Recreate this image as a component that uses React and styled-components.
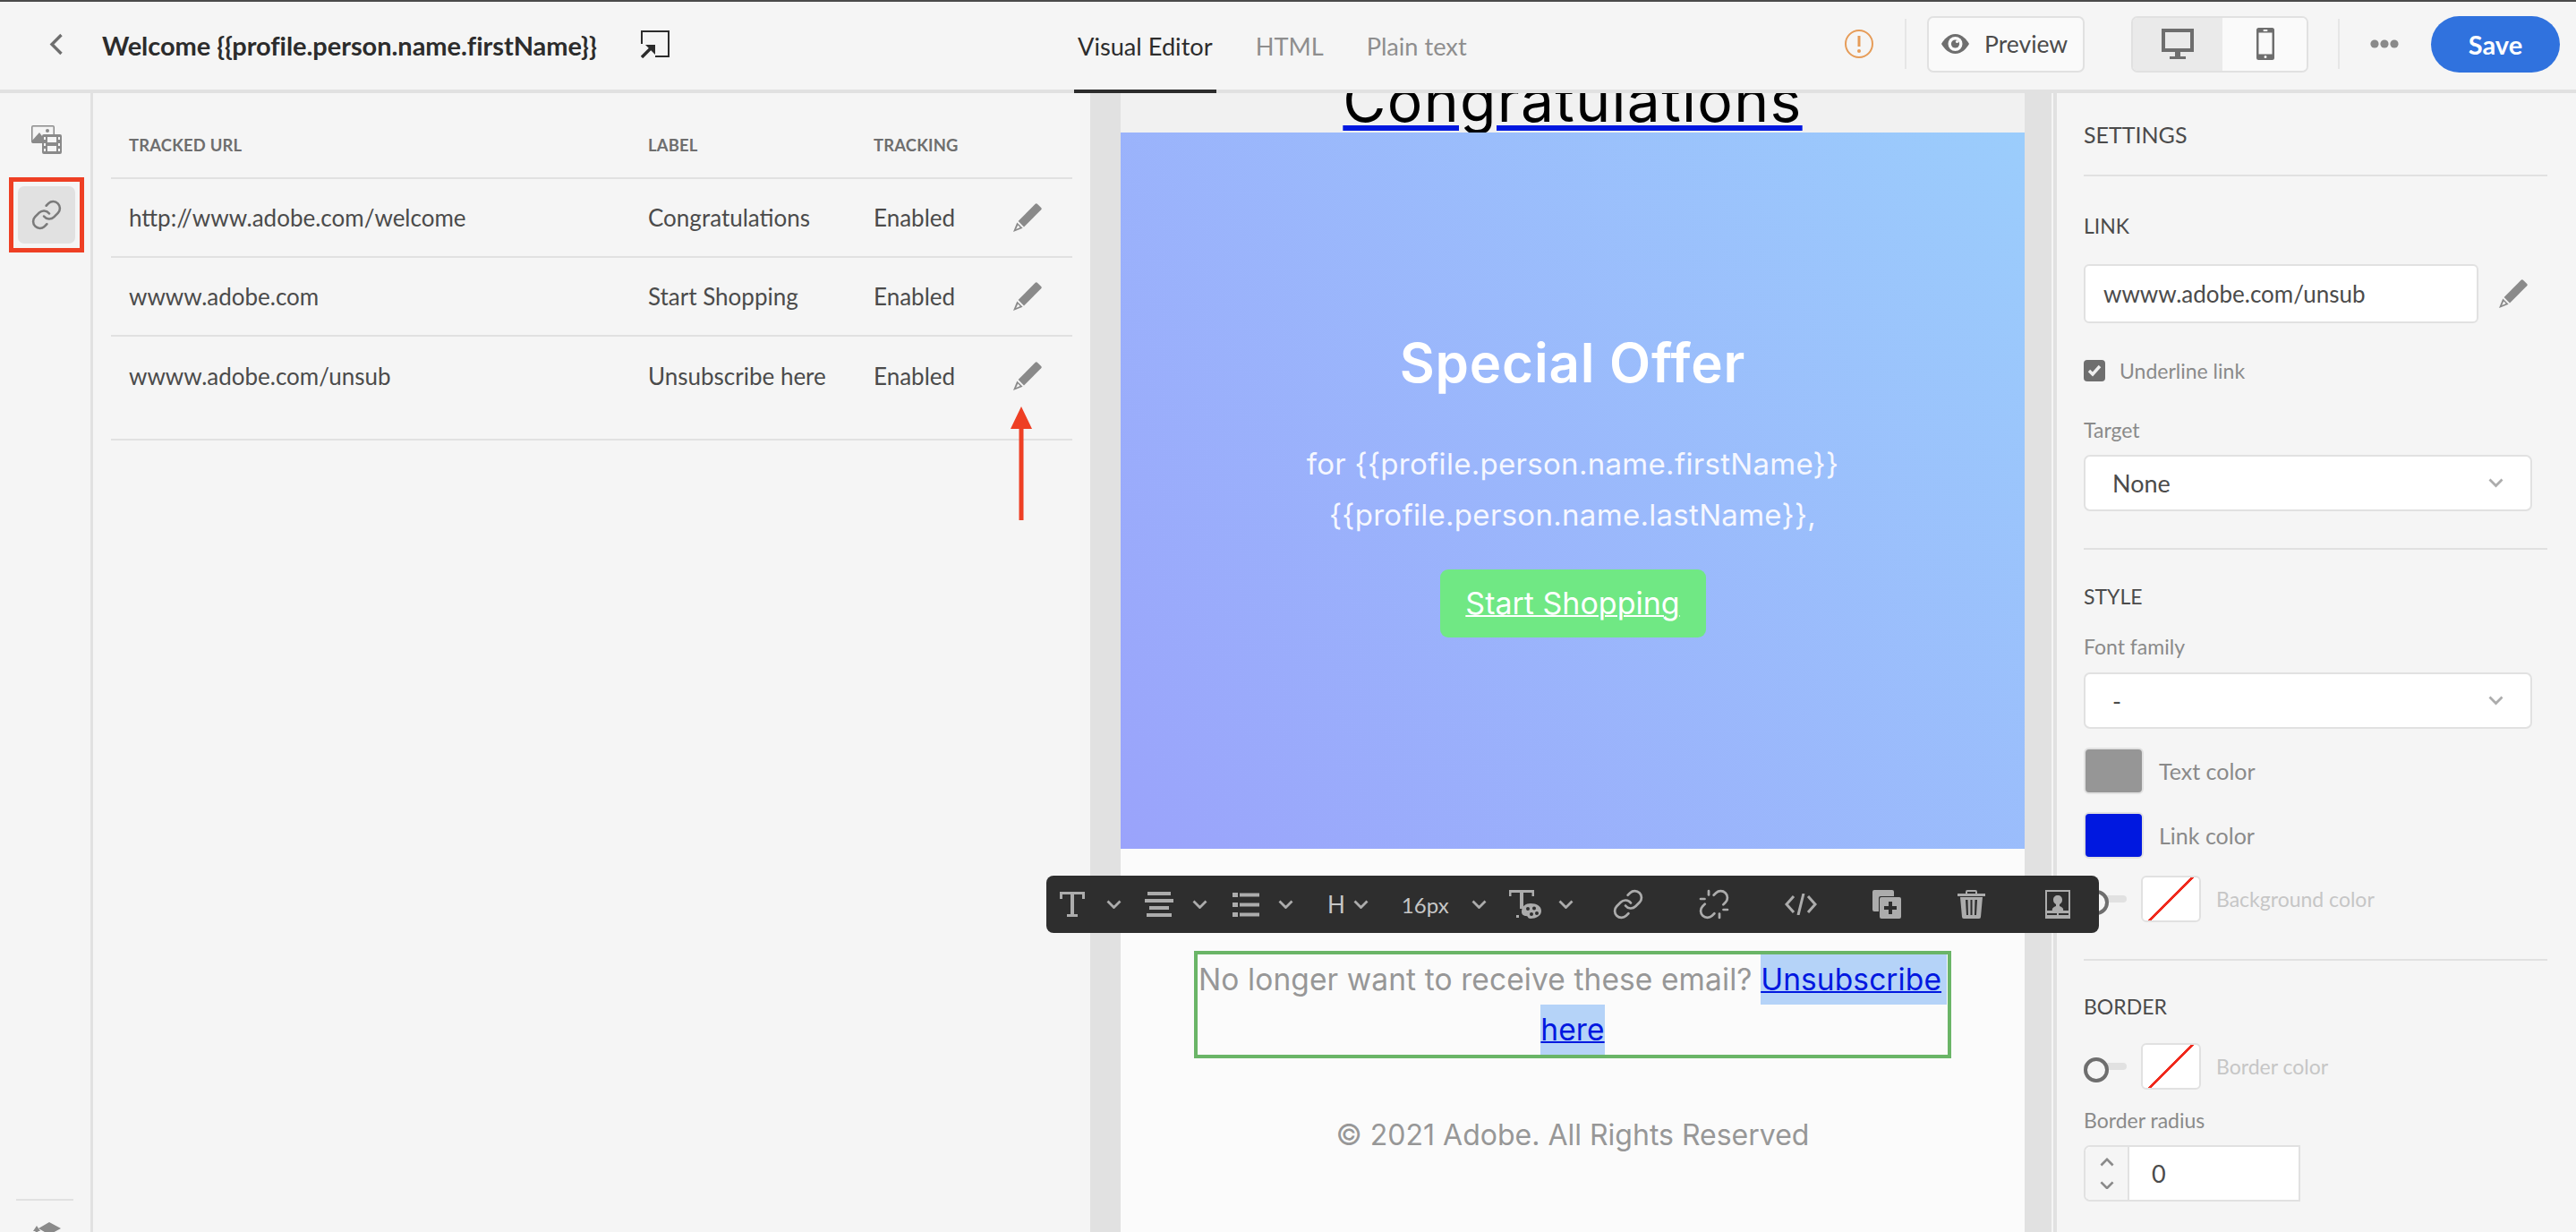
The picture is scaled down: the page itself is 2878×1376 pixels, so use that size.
import React from "react";
import styled, { createGlobalStyle } from "styled-components";
import { Link as LinkIcon, Unlink } from "lucide-react";

const UI_FONT = `"Lato", "Open Sans", sans-serif`;
const MAIL_FONT = `"Inter", "Liberation Sans", sans-serif`;

const GlobalStyle = createGlobalStyle`
  html, body { margin: 0; padding: 0; background: #f5f5f5; }
  body { font-family: ${UI_FONT}; overflow: hidden; }
  * { box-sizing: border-box; }
`;

const Page = styled.div`
  width: 2878px;
  height: 1376px;
  overflow: hidden;
  display: flex;
  flex-direction: column;
  background: #f5f5f5;
  border-top: 2px solid #4b4b4b;
`;

/* header */
const Header = styled.header`
  height: 102px;
  flex: none;
  display: flex;
  align-items: center;
  padding: 0 18px 4px 55px;
  border-bottom: 4px solid #e1e1e1;
`;

const Title = styled.h1`
  margin: 0 0 0 43px;
  padding-top: 2px;
  width: 602px;
  font-size: 29px;
  font-weight: 700;
  color: #2c2c2c;
  white-space: nowrap;
  letter-spacing: -0.05px;
`;

const Tabs = styled.nav`
  display: flex;
  align-self: stretch;
  margin-left: 452px;
  gap: 40px;
`;

const Tab = styled.div`
  display: flex;
  align-items: center;
  padding: 0 4px;
  margin-bottom: -8px;
  font-size: 27.2px;
  color: ${(p) => (p.$active ? "#2c2c2c" : "#8e8e8e")};
  border-bottom: 4px solid ${(p) => (p.$active ? "#2c2c2c" : "transparent")};
`;

const HeaderActions = styled.div`
  margin-left: auto;
  display: flex;
  align-items: center;
`;

const VRule = styled.span`
  width: 2px;
  height: 56px;
  background: #e6e6e6;
  margin: ${(p) => p.$margin};
`;

const PreviewButton = styled.button`
  width: 176px;
  height: 63px;
  display: flex;
  align-items: center;
  gap: 17px;
  padding: 0 0 0 14px;
  background: #fafafa;
  border: 2px solid #e1e1e1;
  border-radius: 7px;
  font-family: ${UI_FONT};
  font-size: 26.5px;
  color: #4b4b4b;
`;

const DeviceToggle = styled.div`
  margin-left: 52px;
  width: 198px;
  height: 63px;
  display: flex;
  border: 2px solid #e1e1e1;
  border-radius: 7px;
  overflow: hidden;
`;

const DeviceButton = styled.div`
  flex: none;
  width: ${(p) => (p.$active ? "100px" : "96px")};
  display: flex;
  align-items: center;
  justify-content: center;
  background: ${(p) => (p.$active ? "#eaeaea" : "#fafafa")};
`;

const Dots = styled.svg`
  margin: 0 36px 0 34px;
`;

const SaveButton = styled.button`
  width: 144px;
  height: 63px;
  border: none;
  border-radius: 32px;
  background: #3072de;
  color: #fff;
  font-family: ${UI_FONT};
  font-size: 29px;
  font-weight: 700;
`;

/* body */
const Body = styled.main`
  position: relative;
  flex: 1;
  min-height: 0;
  display: flex;
`;

const Rail = styled.aside`
  flex: none;
  width: 104px;
  display: flex;
  flex-direction: column;
  border-right: 3px solid #e1e1e1;
  overflow: hidden;
`;

const RailSlot = styled.div`
  position: relative;
  width: 64px;
  height: 64px;
  margin: ${(p) => p.$margin};
  display: flex;
  align-items: center;
  justify-content: center;
  border-radius: 7px;
  background: ${(p) => (p.$active ? "#e1e1e1" : "transparent")};
  ${(p) =>
    p.$active &&
    `&::after {
      content: "";
      position: absolute;
      inset: -10px;
      border: 5px solid #ee3f24;
    }`}
`;

const RailFoot = styled.div`
  margin: auto 0 0 18px;
  width: 64px;
  height: 37px;
  flex: none;
  padding: 24px 0 0 15px;
  border-top: 2px solid #e1e1e1;
`;

const TablePanel = styled.section`
  flex: none;
  width: 1114px;
  padding: 0 20px;
`;

const TableGrid = styled.div`
  display: grid;
  grid-template-columns: 580px 252px 156px 1fr;
  align-items: center;
  height: ${(p) => (p.$head ? "96px" : "88px")};
  padding-left: 20px;
  border-bottom: ${(p) => (p.$plain ? "none" : "2px solid #e1e1e1")};
`;

const HeadCell = styled.div`
  font-size: 18.4px;
  font-weight: 700;
  letter-spacing: 0.2px;
  color: #6e6e6e;
  padding-top: 22px;
`;

const Cell = styled.div`
  font-size: 26px;
  color: #4b4b4b;
  white-space: nowrap;
`;

const TableEnd = styled.div`
  height: 28px;
  border-bottom: 2px solid #e1e1e1;
`;

const Arrow = styled.svg`
  position: absolute;
  left: 1129px;
  top: 350px;
`;

const Canvas = styled.section`
  flex: none;
  width: 1074px;
  padding: 0 30px 0 34px;
  background: #e1e1e1;
  overflow: hidden;
`;

const Mail = styled.div`
  width: 1010px;
  height: 100%;
  background: #fbfbfb;
  display: flex;
  flex-direction: column;
  align-items: center;
  font-family: ${MAIL_FONT};
`;

const HeadingStrip = styled.div`
  flex: none;
  width: 100%;
  height: 44px;
  overflow: hidden;
  background: #f1f1f1;
  text-align: center;
`;

const Congrats = styled.a`
  display: block;
  margin-top: -23px;
  font-size: 66px;
  line-height: 62px;
  letter-spacing: 1.3px;
  color: #000;
  text-decoration: underline #0018e0;
  text-decoration-thickness: 6px;
  text-underline-offset: 4px;
`;

const Hero = styled.div`
  flex: none;
  width: 100%;
  height: 800px;
  padding-top: 217px;
  display: flex;
  flex-direction: column;
  align-items: center;
  text-align: center;
  color: #fff;
  background: linear-gradient(52deg, #9aa3fb 0%, #9bcdfc 100%);
`;

const HeroTitle = styled.h2`
  margin: 0;
  font-size: 60px;
  line-height: 80px;
  font-weight: 600;
  letter-spacing: 0.8px;
`;

const HeroText = styled.p`
  margin: 45px 0 0;
  font-size: 33px;
  line-height: 57px;
  letter-spacing: 0.3px;
  color: #f5f7ff;
`;

const ShopButton = styled.a`
  margin-top: 32px;
  padding-bottom: 2px;
  width: 297px;
  height: 76px;
  display: flex;
  align-items: center;
  justify-content: center;
  border-radius: 9px;
  background: #70e884;
  color: #fff;
  font-size: 34px;
  text-decoration: underline;
  text-decoration-thickness: 2px;
`;

const SelectedBlock = styled.div`
  flex: none;
  margin-top: 114px;
  width: 846px;
  height: 120px;
  border: 4px solid #6ab567;
  text-align: center;
  font-size: 33.5px;
  line-height: 56px;
  letter-spacing: 0.1px;
  color: #979797;
`;

const SelectedLink = styled.a`
  display: inline-block;
  height: 56px;
  padding-right: ${(p) => p.$pad || "0"};
  background: #b5d3f8;
  color: #0018e0;
  text-decoration: underline;
  text-decoration-thickness: 2px;
`;

const MailFooter = styled.div`
  margin-top: 58px;
  font-size: 32px;
  line-height: 56px;
  color: #979797;
`;

const PanelEdge = styled.div`
  flex: none;
  width: 6px;
  border-left: 2px solid #f5f5f5;
  background: #e1e1e1;
`;

const Settings = styled.aside`
  flex: 1;
  padding: 0 32px 0 30px;
  display: flex;
  flex-direction: column;
  align-items: flex-start;
  overflow: hidden;
`;

const PanelTitle = styled.div`
  width: 100%;
  height: 93px;
  flex: none;
  padding-top: 28px;
  font-size: 25px;
  line-height: 36px;
  color: #4b4b4b;
  border-bottom: 2px solid #e1e1e1;
`;

const SectionTitle = styled.div`
  flex: none;
  margin-top: ${(p) => p.$top};
  font-size: 23px;
  line-height: 32px;
  color: #4b4b4b;
`;

const FieldLabel = styled.div`
  flex: none;
  margin-top: ${(p) => p.$top};
  font-size: 23px;
  line-height: 32px;
  color: #8a8a8a;
`;

const LinkRow = styled.div`
  flex: none;
  margin-top: 27px;
  display: flex;
  align-items: center;
  gap: 23px;
`;

const TextField = styled.div`
  width: 441px;
  height: 66px;
  display: flex;
  align-items: center;
  padding-left: 20px;
  background: #fff;
  border: 2px solid #e1e1e1;
  border-radius: 6px;
  font-size: 26px;
  color: #4b4b4b;
`;

const CheckRow = styled.div`
  flex: none;
  margin-top: 41px;
  display: flex;
  align-items: center;
  gap: 16px;
  font-size: 23px;
  line-height: 24px;
  color: #8a8a8a;
`;

const CheckBox = styled.span`
  width: 24px;
  height: 24px;
  display: flex;
  align-items: center;
  justify-content: center;
  background: #6e6e6e;
  border-radius: 4px;
`;

const SelectBox = styled.div`
  flex: none;
  width: 501px;
  height: 63px;
  margin-top: ${(p) => p.$top};
  display: flex;
  align-items: center;
  justify-content: space-between;
  padding: 0 30px;
  background: #fff;
  border: 2px solid #e1e1e1;
  border-radius: 7px;
  font-size: 27px;
  color: #4b4b4b;
`;

const Divider = styled.div`
  flex: none;
  width: 100%;
  height: 2px;
  margin-top: ${(p) => p.$top};
  background: #e1e1e1;
`;

const ColorRow = styled.div`
  flex: none;
  display: flex;
  align-items: center;
  margin-top: ${(p) => p.$top};
`;

const Swatch = styled.span`
  flex: none;
  width: 67px;
  height: 52px;
  background: ${(p) => p.$color};
  border: 2px solid #e1e1e1;
  border-radius: 6px;
  margin-right: 17px;
`;

const ColorLabel = styled.span`
  font-size: ${(p) => (p.$muted ? "23px" : "25px")};
  color: ${(p) => (p.$muted ? "#c6c6c6" : "#8a8a8a")};
`;

const Toggle = styled.span`
  position: relative;
  flex: none;
  width: 48px;
  height: 8px;
  margin-right: 16px;
  background: #e1e1e1;
  border-radius: 4px;
  &::before {
    content: "";
    position: absolute;
    left: 0;
    top: -6px;
    width: 20px;
    height: 20px;
    border: 4px solid #6e6e6e;
    border-radius: 50%;
    background: #f5f5f5;
  }
`;

const NoColor = styled(Swatch)`
  background: linear-gradient(135deg, transparent calc(50% - 1.2px), #f0291c calc(50% - 1.2px), #f0291c calc(50% + 1.2px), transparent calc(50% + 1.2px)), #fff;
`;

const Stepper = styled.div`
  flex: none;
  margin-top: 12px;
  width: 242px;
  height: 63px;
  display: flex;
  border: 2px solid #e1e1e1;
  border-radius: 7px 0 0 7px;
  background: #fff;
`;

const StepButtons = styled.div`
  width: 49px;
  display: flex;
  flex-direction: column;
  align-items: center;
  justify-content: center;
  gap: 16px;
  background: #f5f5f5;
  border-right: 2px solid #e1e1e1;
  border-radius: 6px 0 0 6px;
`;

const StepValue = styled.div`
  display: flex;
  align-items: center;
  padding-left: 25px;
  font-size: 27px;
  color: #4b4b4b;
`;

/* floating text toolbar */
const Toolbar = styled.div`
  position: absolute;
  left: 1169px;
  top: 874px;
  width: 1176px;
  height: 64px;
  display: flex;
  align-items: center;
  background: #2e2e2e;
  border-radius: 8px;
  color: #acacac;
  z-index: 2;
`;

const ToolSlot = styled.span`
  flex: none;
  display: flex;
  align-items: center;
  margin-left: ${(p) => p.$ml}px;
  font-size: ${(p) => p.$size || 24}px;
  color: #c6c6c6;
`;

/* drawings */
const Chevron = ({ w = 17, color = "#acacac", up = false }) => (
  <svg width={w} height={w * 0.62} viewBox="0 0 17 10.5" fill="none">
    <path d={up ? "M1.5 9 8.5 2l7 7" : "M1.5 1.5l7 7 7-7"} stroke={color} strokeWidth="2.8" />
  </svg>
);

const Pencil = () => (
  <svg width="32" height="32" viewBox="0 0 32 32" fill="#8a8a8a">
    <path d="M24.7.8a1.6 1.6 0 0 1 2.2 0l4.3 4.3a1.6 1.6 0 0 1 0 2.2L12 26.4 5.6 20z" />
    <path d="M4.3 21.5l6.3 6.3L0 32zM5.2 24.4l-2 4.5 4.5-2z" fillRule="evenodd" />
  </svg>
);

const BackIcon = () => (
  <svg width="16" height="25" viewBox="0 0 16 25" fill="none">
    <path d="M13.5 2 3 12.5 13.5 23" stroke="#6e6e6e" strokeWidth="3.4" />
  </svg>
);

const ShareIcon = () => (
  <svg width="32" height="31" viewBox="0 0 32 31" fill="none">
    <path d="M1 15V1h30v28H16" stroke="#2c2c2c" strokeWidth="2" />
    <path d="M1 30 12 19" stroke="#2c2c2c" strokeWidth="3.4" />
    <path d="M5 16h11v11z" fill="#2c2c2c" />
  </svg>
);

const WarningIcon = () => (
  <svg width="32" height="32" viewBox="0 0 32 32" fill="none">
    <circle cx="16" cy="16" r="15" stroke="#e69c58" strokeWidth="2" />
    <path d="M16 7v12" stroke="#e69c58" strokeWidth="3" />
    <circle cx="16" cy="24" r="2" fill="#e69c58" />
  </svg>
);

const EyeIcon = () => (
  <svg width="31" height="22" viewBox="0 0 31 22">
    <path d="M15.5 0C8 0 3 6 0 11c3 5 8 11 15.5 11S28 16 31 11C28 6 23 0 15.5 0z" fill="#6e6e6e" />
    <circle cx="15.5" cy="11" r="8" fill="#fafafa" />
    <circle cx="15.5" cy="11" r="4.6" fill="#6e6e6e" />
    <circle cx="17.5" cy="8.5" r="1.6" fill="#fafafa" />
  </svg>
);

const DesktopIcon = () => (
  <svg width="36" height="34" viewBox="0 0 36 34" fill="#6e6e6e">
    <path fillRule="evenodd" d="M0 0h36v26H0zM4 4v18h28V4z" />
    <path d="M15 26h6v5h-6zM9 31h18v3H9z" />
  </svg>
);

const PhoneIcon = () => (
  <svg width="20" height="36" viewBox="0 0 20 36" fill="#6e6e6e">
    <path fillRule="evenodd" d="M2.5 0h15A2.5 2.5 0 0 1 20 2.500v31a2.500 2.500 0 0 1-2.500 2.500h-15A2.500 2.500 0 0 1 0 33.500v-31A2.500 2.500 0 0 1 2.500 0zM2.500 5.500v24h15v-24zM10 31a1.500 1.500 0 1 0 0 3 1.500 1.500 0 0 0 0-3zM8.500 2a1 1 0 0 0 0 2h3a1 1 0 0 0 0-2z" />
  </svg>
);

const DotsIcon = () => (
  <Dots width="32" height="10" viewBox="0 0 32 10" fill="#8a8a8a">
    <circle cx="5" cy="5" r="4.600" />
    <circle cx="16" cy="5" r="4.600" />
    <circle cx="27" cy="5" r="4.600" />
  </Dots>
);

const AssetsIcon = () => (
  <svg width="34" height="32" viewBox="0 0 34 32" fill="#8a8a8a">
    <path fillRule="evenodd" d="M0 2a2 2 0 0 1 2-2h22a2 2 0 0 1 2 2v8h-1.500V1.500h-23v17H10V20H2a2 2 0 0 1-2-2z" />
    <path d="M0 18l9-10 3 4v8H2z" />
    <circle cx="18" cy="6" r="2" />
    <path fillRule="evenodd" d="M14 10h18a2 2 0 0 1 2 2v18a2 2 0 0 1-2 2H14a2 2 0 0 1-2-2V12a2 2 0 0 1 2-2zM18 13v6h10v-6zM18 23v6h10v-6zM14 13v3h2v-3zM14 20v3h2v-3zM14 26v3h2v-3zM30 13v3h2v-3zM30 20v3h2v-3zM30 26v3h2v-3z" />
  </svg>
);

const RailFootIcon = () => (
  <svg width="36" height="30" viewBox="0 0 36 30" fill="#8a8a8a">
    <path d="M4 10 8 4l4 6H9.500v20h-3V10zM10 7 22 0l13 7-13 7z" />
  </svg>
);

const TextIcon = () => (
  <svg width="28" height="28" viewBox="0 0 28 28" fill="#acacac">
    <path d="M0 0h28v8h-3V3H16v22h4v3H8v-3h4V3H3v5H0z" />
  </svg>
);

const AlignIcon = () => (
  <svg width="32" height="28" viewBox="0 0 32 28" fill="#acacac">
    <path d="M3 0h26v4H3zM0 8h32v4H0zM5 16h22v4H5zM2 24h28v4H2z" />
  </svg>
);

const ListIcon = () => (
  <svg width="30" height="28" viewBox="0 0 30 28" fill="#acacac">
    <path d="M0 1h6v5H0zM8 1.500h22v4H8zM0 12h6v5H0zM8 12.500h22v4H8zM0 23h6v5H0zM8 23.500h22v4H8z" />
  </svg>
);

const TextColorIcon = () => (
  <svg width="36" height="32" viewBox="0 0 36 32" fill="#acacac">
    <path d="M0 0h28v7h-2.500V3H16v18h-4V3H2.500v4H0z" />
    <path d="M8 28h3v3H8z" />
    <path fillRule="evenodd" d="M24 15c7 0 12 3 12 8.500S30 32 24 32c-4 0-2-3-5-3-2.500 0-5-1.500-5-4.500C14 18 18.500 15 24 15zM21 19a2 2 0 1 0 0 4 2 2 0 0 0 0-4zM28 18.500a2 2 0 1 0 0 4 2 2 0 0 0 0-4zM31 24a2 2 0 1 0 0 4 2 2 0 0 0 0-4zM25 25a2 2 0 1 0 0 4 2 2 0 0 0 0-4z" />
  </svg>
);

const CodeIcon = () => (
  <svg width="36" height="24" viewBox="0 0 36 24" fill="none" stroke="#acacac" strokeWidth="3">
    <path d="M10 3 2 12l8 9M26 3l8 9-8 9M21 0l-6 24" />
  </svg>
);

const AddCopyIcon = () => (
  <svg width="32" height="32" viewBox="0 0 32 32" fill="#acacac">
    <path d="M0 2a2 2 0 0 1 2-2h20a2 2 0 0 1 2 2v5H9a2 2 0 0 0-2 2v15H2a2 2 0 0 1-2-2z" />
    <path fillRule="evenodd" d="M10 8h20a2 2 0 0 1 2 2v20a2 2 0 0 1-2 2H10a2 2 0 0 1-2-2V10a2 2 0 0 1 2-2zM18 13v5h-5v4h5v5h4v-5h5v-4h-5v-5z" />
  </svg>
);

const TrashIcon = () => (
  <svg width="31" height="32" viewBox="0 0 31 32" fill="#acacac">
    <path fillRule="evenodd" d="M0 4h9V2a2 2 0 0 1 2-2h9a2 2 0 0 1 2 2v2h9v3H0zM11 2v2h9V2z" />
    <path fillRule="evenodd" d="M3 8h25l-2 22a2 2 0 0 1-2 2H7a2 2 0 0 1-2-2zM9 11l1 17h2l-.5-17zM14.500 11v17h2V11zM19.500 11l-.5 17h2l1-17z" />
  </svg>
);

const PersonCardIcon = () => (
  <svg width="28" height="32" viewBox="0 0 28 32" fill="#acacac">
    <path fillRule="evenodd" d="M0 0h28v32H0zM2 2v21h6c-1-2 1-4 4-5v-2c-2-1-3-3-3-5 0-3 2-5 5-5s5 2 5 5c0 2-1 4-3 5v2c3 1 5 3 4 5h6V2zM2 26v2h11v-2zM15 26v2h11v-2z" />
  </svg>
);

const rows = [
  ["http://www.adobe.com/welcome", "Congratulations"],
  ["wwww.adobe.com", "Start Shopping"],
  ["wwww.adobe.com/unsub", "Unsubscribe here"],
];

const App = () => (
  <Page>
    <GlobalStyle />
    <Header>
      <BackIcon />
      <Title>Welcome {"{{profile.person.name.firstName}}"}</Title>
      <ShareIcon />
      <Tabs>
        <Tab $active>Visual Editor</Tab>
        <Tab>HTML</Tab>
        <Tab>Plain text</Tab>
      </Tabs>
      <HeaderActions>
        <WarningIcon />
        <VRule $margin="0 23px 0 35px" />
        <PreviewButton>
          <EyeIcon />
          Preview
        </PreviewButton>
        <DeviceToggle>
          <DeviceButton $active><DesktopIcon /></DeviceButton>
          <DeviceButton><PhoneIcon /></DeviceButton>
        </DeviceToggle>
        <VRule $margin="0 0 0 33px" />
        <DotsIcon />
        <SaveButton>Save</SaveButton>
      </HeaderActions>
    </Header>

    <Body>
      <Rail>
        <RailSlot $margin="20px 0 0 20px"><AssetsIcon /></RailSlot>
        <RailSlot $active $margin="20px 0 0 20px">
          <LinkIcon size={36} color="#7a7a7a" strokeWidth={1.7} />
        </RailSlot>
        <RailFoot><RailFootIcon /></RailFoot>
      </Rail>

      <TablePanel>
        <TableGrid $head>
          <HeadCell>TRACKED URL</HeadCell>
          <HeadCell>LABEL</HeadCell>
          <HeadCell>TRACKING</HeadCell>
        </TableGrid>
        {rows.map(([url, label], i) => (
          <TableGrid key={url} $plain={i === rows.length - 1}>
            <Cell>{url}</Cell>
            <Cell>{label}</Cell>
            <Cell>Enabled</Cell>
            <Pencil />
          </TableGrid>
        ))}
        <TableEnd />
      </TablePanel>

      <Canvas>
        <Mail>
          <HeadingStrip>
            <Congrats>Congratulations</Congrats>
          </HeadingStrip>
          <Hero>
            <HeroTitle>Special Offer</HeroTitle>
            <HeroText>
              for {"{{profile.person.name.firstName}}"}
              <br />
              {"{{profile.person.name.lastName}},"}
            </HeroText>
            <ShopButton>Start Shopping</ShopButton>
          </Hero>
          <SelectedBlock>
            No longer want to receive these email? <SelectedLink $pad="6px">Unsubscribe</SelectedLink>{" "}
            <SelectedLink>here</SelectedLink>
          </SelectedBlock>
          <MailFooter>© 2021 Adobe. All Rights Reserved</MailFooter>
        </Mail>
      </Canvas>
      <PanelEdge />

      <Settings>
        <PanelTitle>SETTINGS</PanelTitle>
        <SectionTitle $top="39px">LINK</SectionTitle>
        <LinkRow>
          <TextField>wwww.adobe.com/unsub</TextField>
          <Pencil />
        </LinkRow>
        <CheckRow>
          <CheckBox>
            <svg width="16" height="14" viewBox="0 0 16 14" fill="none">
              <path d="M2 7l4 4 8-9" stroke="#efefef" strokeWidth="3.400" />
            </svg>
          </CheckBox>
          Underline link
        </CheckRow>
        <FieldLabel $top="38px">Target</FieldLabel>
        <SelectBox $top="12px">None<Chevron /></SelectBox>
        <Divider $top="41px" />
        <SectionTitle $top="36px">STYLE</SectionTitle>
        <FieldLabel $top="24px">Font family</FieldLabel>
        <SelectBox $top="13px">-<Chevron /></SelectBox>
        <ColorRow $top="21px">
          <Swatch $color="#969696" />
          <ColorLabel>Text color</ColorLabel>
        </ColorRow>
        <ColorRow $top="20px">
          <Swatch $color="#0018e0" />
          <ColorLabel>Link color</ColorLabel>
        </ColorRow>
        <ColorRow $top="19px">
          <Toggle />
          <NoColor />
          <ColorLabel $muted>Background color</ColorLabel>
        </ColorRow>
        <Divider $top="41px" />
        <SectionTitle $top="35px">BORDER</SectionTitle>
        <ColorRow $top="25px">
          <Toggle />
          <NoColor />
          <ColorLabel $muted>Border color</ColorLabel>
        </ColorRow>
        <FieldLabel $top="18px">Border radius</FieldLabel>
        <Stepper>
          <StepButtons>
            <Chevron w={16} color="#8a8a8a" up />
            <Chevron w={16} color="#8a8a8a" />
          </StepButtons>
          <StepValue>0</StepValue>
        </Stepper>
      </Settings>

      <Toolbar>
        <ToolSlot $ml={15}><TextIcon /></ToolSlot>
        <ToolSlot $ml={24}><Chevron /></ToolSlot>
        <ToolSlot $ml={26}><AlignIcon /></ToolSlot>
        <ToolSlot $ml={21}><Chevron /></ToolSlot>
        <ToolSlot $ml={28}><ListIcon /></ToolSlot>
        <ToolSlot $ml={21}><Chevron /></ToolSlot>
        <ToolSlot $ml={38} $size={26}>H</ToolSlot>
        <ToolSlot $ml={9}><Chevron /></ToolSlot>
        <ToolSlot $ml={37}>16px</ToolSlot>
        <ToolSlot $ml={25}><Chevron /></ToolSlot>
        <ToolSlot $ml={25}><TextColorIcon /></ToolSlot>
        <ToolSlot $ml={19}><Chevron /></ToolSlot>
        <ToolSlot $ml={43}><LinkIcon size={36} color="#acacac" strokeWidth={1.8} /></ToolSlot>
        <ToolSlot $ml={60}><Unlink size={36} color="#acacac" strokeWidth={1.8} /></ToolSlot>
        <ToolSlot $ml={61}><CodeIcon /></ToolSlot>
        <ToolSlot $ml={62}><AddCopyIcon /></ToolSlot>
        <ToolSlot $ml={63}><TrashIcon /></ToolSlot>
        <ToolSlot $ml={67}><PersonCardIcon /></ToolSlot>
      </Toolbar>

      <Arrow width="24" height="127" viewBox="0 0 24 127">
        <path d="M12 0l12 25h-9.500v102h-5V25H0z" fill="#ee3f24" />
      </Arrow>
    </Body>
  </Page>
);

export default App;
